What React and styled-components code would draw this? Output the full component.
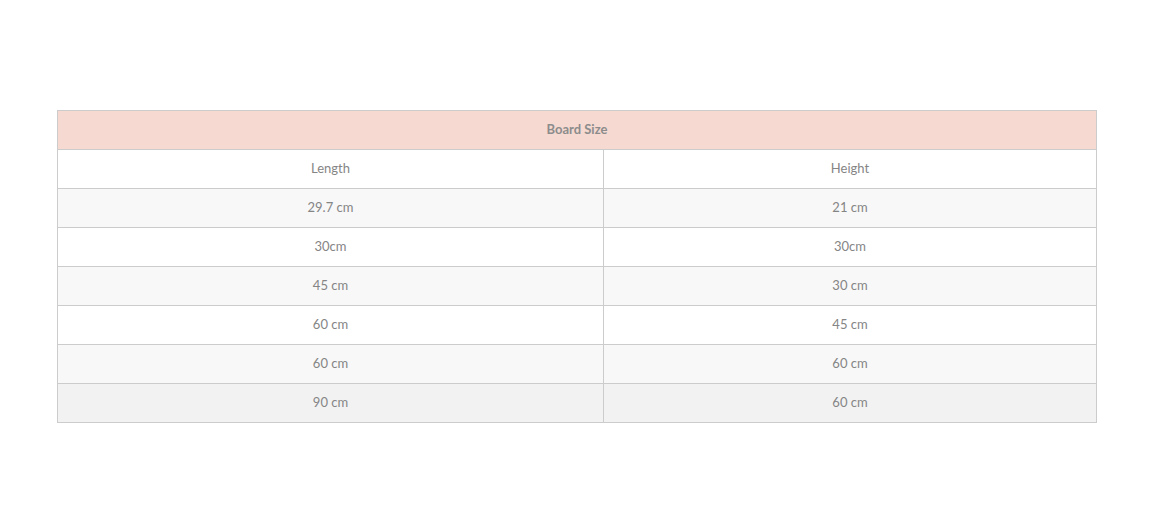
import React from "react";
import styled, { createGlobalStyle } from "styled-components";

const Global = createGlobalStyle`
  html, body { margin: 0; padding: 0; background: #fff; }
  body { font-family: "Lato", "Open Sans", sans-serif; }
`;

const Page = styled.div`
  padding: 110px 53px 0 57px;
`;

const Table = styled.table`
  width: 1040px;
  border-collapse: collapse;
  table-layout: fixed;
  border: 1px solid #cccccc;
  font-size: 13px;
  color: #858585;
`;

const HeadCell = styled.th`
  height: 36px;
  padding: 0 0 2px;
  background: #f6d9d0;
  color: #8c8c8c;
  font-size: 13px;
  font-weight: 700;
  text-align: center;
  border: 1px solid #cccccc;
`;

const Row = styled.tr`
  background: ${(p) => p.$bg};
`;

const Cell = styled.td`
  height: 36px;
  padding: 0 0 2px;
  text-align: center;
  border: 1px solid #cccccc;
`;

const rows = [
  ["Length", "Height"],
  ["29.7 cm", "21 cm"],
  ["30cm", "30cm"],
  ["45 cm", "30 cm"],
  ["60 cm", "45 cm"],
  ["60 cm", "60 cm"],
  ["90 cm", "60 cm"],
];

export default function App() {
  return (
    <>
      <Global />
      <Page>
        <Table>
          <colgroup>
            <col style={{ width: 546 }} />
            <col />
          </colgroup>
          <thead>
            <tr>
              <HeadCell colSpan={2}>Board Size</HeadCell>
            </tr>
          </thead>
          <tbody>
            {rows.map((r, i) => (
              <Row
                key={i}
                $bg={i === rows.length - 1 ? "#f2f2f2" : i % 2 === 1 ? "#f8f8f8" : "#ffffff"}
              >
                <Cell>{r[0]}</Cell>
                <Cell>{r[1]}</Cell>
              </Row>
            ))}
          </tbody>
        </Table>
      </Page>
    </>
  );
}
